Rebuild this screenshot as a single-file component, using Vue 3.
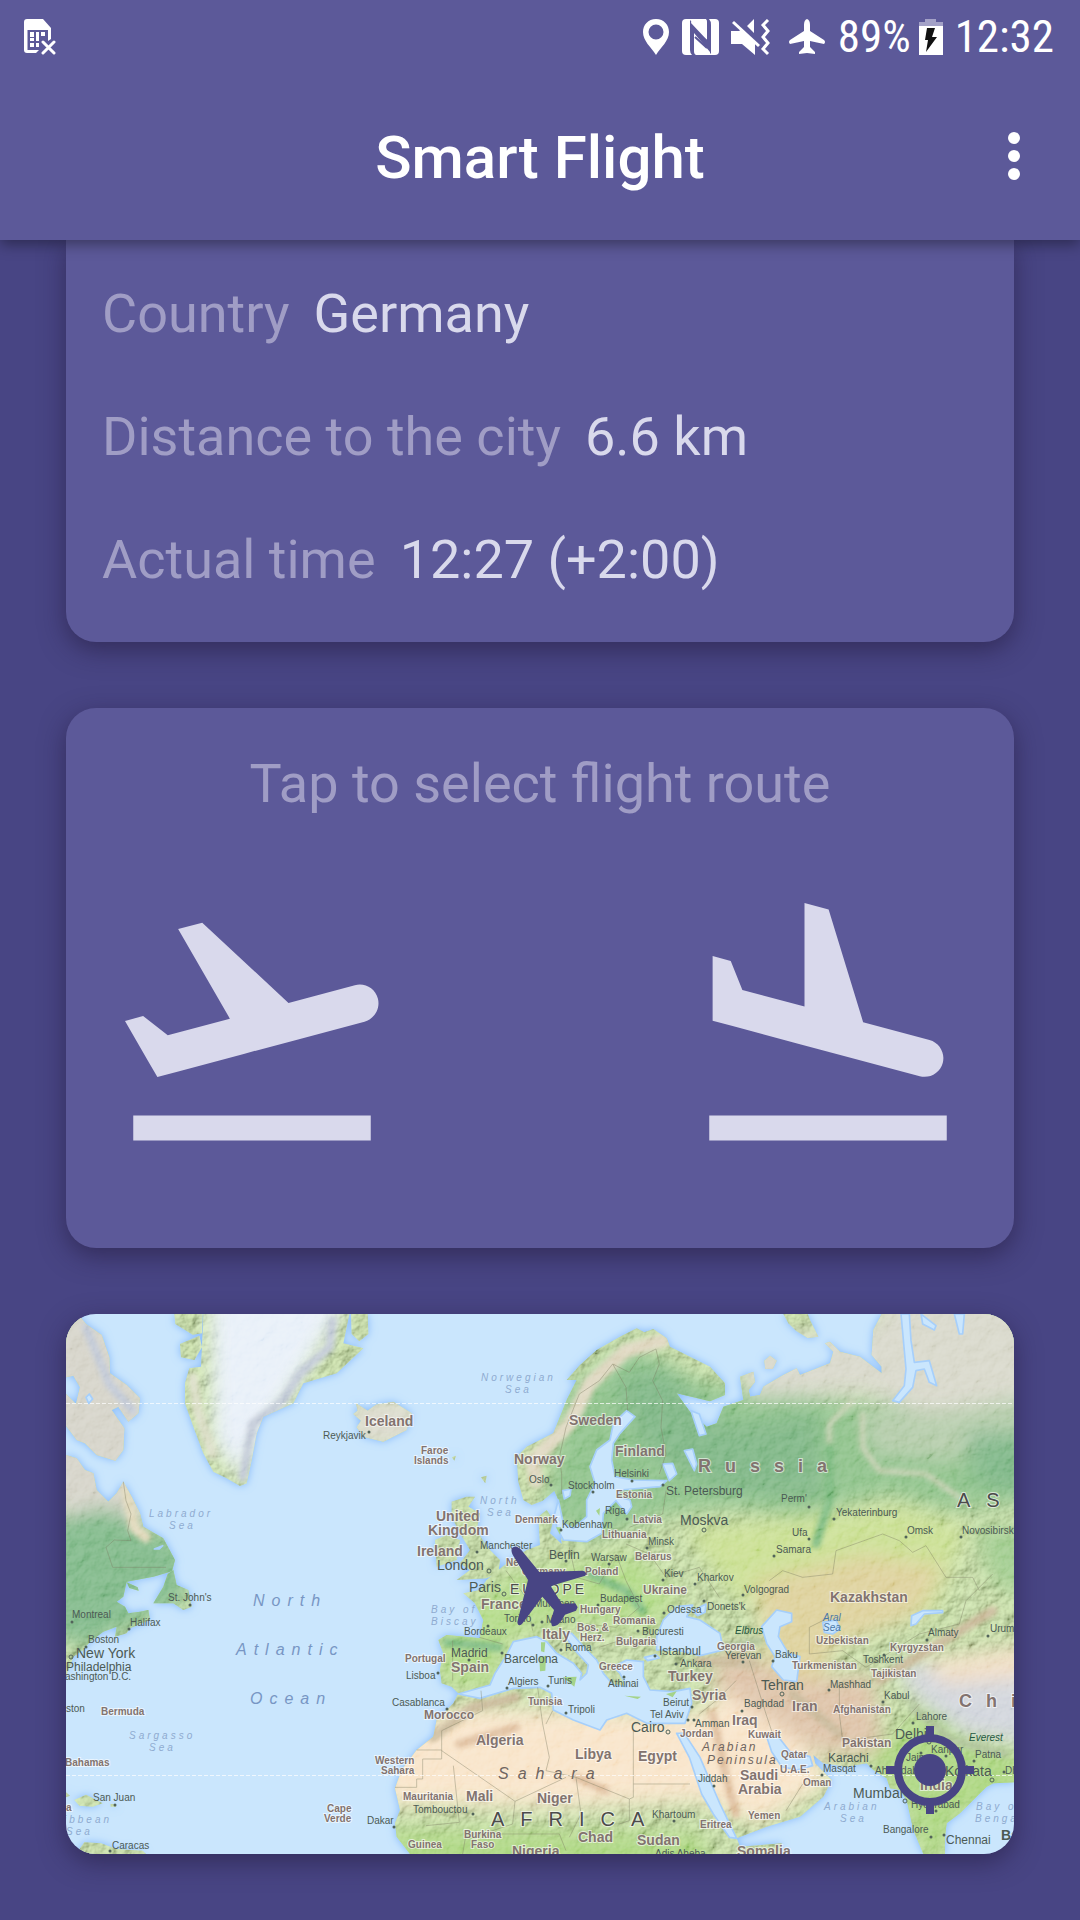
<script setup>
const facts = [
  { label: 'Country', value: 'Germany' },
  { label: 'Distance to the city', value: '6.6 km' },
  { label: 'Actual time', value: '12:27 (+2:00)' }
]

// Map labels grouped by lettering style: [text, x, y]
const labels = {
  city: [
    ['Reykjavik', 257, 125], ['Oslo', 463, 169], ['Helsinki', 548, 163], ['Stockholm', 502, 175],
    ['Riga', 539, 200], ['Kobenhavn', 496, 214], ['Minsk', 582, 231], ['Manchester', 414, 235],
    ['Warsaw', 525, 247], ['Kiev', 598, 263], ['Kharkov', 631, 267], ["Perm'", 715, 188],
    ['Yekaterinburg', 770, 202], ['Ufa', 726, 222], ['Samara', 710, 239], ['Omsk', 841, 220],
    ['Novosibirsk', 896, 220], ["St. John's", 102, 287], ['Montreal', 6, 304], ['Halifax', 64, 312],
    ['Boston', 22, 329], ['ashington D.C.', -1, 366], ['ston', 0, 398], ['San Juan', 27, 487],
    ['Caracas', 46, 535], ['Dakar', 301, 510], ['Munchen', 468, 293], ['Torino', 438, 308],
    ['Milano', 480, 309], ['Budapest', 534, 288], ['Odessa', 601, 299], ['Bucuresti', 576, 321],
    ['Roma', 499, 337], ['Bordeaux', 398, 321], ['Lisboa', 340, 365], ['Algiers', 442, 371],
    ['Tunis', 482, 370], ['Athinai', 542, 373], ['Ankara', 614, 353], ['Casablanca', 326, 392],
    ['Tripoli', 502, 399], ['Beirut', 597, 392], ['Tel Aviv', 584, 404], ['Amman', 629, 413],
    ['Tombouctou', 347, 499], ['Khartoum', 586, 504], ['Adis Abeba', 589, 543], ['Jiddah', 632, 468],
    ['Volgograd', 678, 279], ["Donets'k", 641, 296], ['Yerevan', 659, 345], ['Baku', 709, 344],
    ['Toshkent', 797, 349], ['Almaty', 862, 322], ['Urumqi', 924, 318], ['Mashhad', 764, 374],
    ['Kabul', 818, 385], ['Baghdad', 678, 393], ['Lahore', 850, 406], ['Kanpur', 865, 439],
    ['Patna', 909, 444], ['Jaipur', 840, 447], ['Ahmadabad', 809, 460], ['Dhaka', 939, 460],
    ['Masqat', 757, 458], ['Hyderabad', 845, 494], ['Bangalore', 817, 519]
  ],
  town: [
    ['Berlin', 483, 245], ['St. Petersburg', 600, 181], ['Philadelphia', 0, 357], ['Madrid', 385, 343],
    ['Barcelona', 438, 349], ['Istanbul', 593, 341], ['Karachi', 762, 448], ['Chennai', 880, 530]
  ],
  capital: [
    ['London', 371, 256], ['Moskva', 614, 211], ['New York', 10, 344], ['Paris', 403, 278],
    ['Cairo', 565, 418], ['Tehran', 695, 376], ['Delhi', 829, 425], ['Kolkata', 879, 462],
    ['Mumbai', 787, 484]
  ],
  state: [
    ['Faroe', 355, 140], ['Islands', 348, 150], ['Estonia', 550, 184], ['Latvia', 567, 209],
    ['Denmark', 449, 209], ['Lithuania', 536, 224], ['Belarus', 569, 246], ['Neth.', 440, 252],
    ['Germany', 456, 261], ['Poland', 519, 261], ['Bermuda', 35, 401], ['Bahamas', -1, 452],
    ['a', 0, 497], ['Cape', 261, 498], ['Verde', 258, 508], ['Western', 309, 450], ['Sahara', 315, 460],
    ['Hungary', 514, 299], ['Romania', 547, 310], ['Bulgaria', 550, 331], ['Bos. &', 511, 317],
    ['Herz.', 514, 327], ['Portugal', 339, 348], ['Greece', 533, 356], ['Tunisia', 462, 391],
    ['Jordan', 614, 423], ['Mauritania', 337, 486], ['Burkina', 398, 524], ['Faso', 405, 534],
    ['Guinea', 342, 534], ['Eritrea', 634, 514], ['Uzbekistan', 750, 330], ['Georgia', 651, 336],
    ['Turkmenistan', 726, 355], ['Kyrgyzstan', 824, 337], ['Tajikistan', 805, 363],
    ['Afghanistan', 767, 399], ['Kuwait', 682, 424], ['Qatar', 715, 444], ['U.A.E.', 714, 459],
    ['Oman', 737, 472], ['Yemen', 682, 505]
  ],
  nation: [['Ukraine', 577, 280], ['Morocco', 358, 405], ['Pakistan', 776, 433]],
  country: [
    ['Iceland', 299, 112], ['Sweden', 503, 111], ['Norway', 448, 150], ['Finland', 549, 142],
    ['United', 370, 207], ['Kingdom', 362, 221], ['Ireland', 351, 242], ['France', 415, 295],
    ['Italy', 476, 325], ['Spain', 385, 358], ['Turkey', 602, 367], ['Syria', 626, 386],
    ['Algeria', 410, 431], ['Libya', 509, 445], ['Egypt', 572, 447], ['Mali', 400, 487],
    ['Niger', 471, 489], ['Nigeria', 446, 542], ['Chad', 512, 528], ['Sudan', 571, 531],
    ['Kazakhstan', 764, 288], ['Iran', 726, 397], ['Iraq', 666, 411], ['Saudi', 674, 466],
    ['Arabia', 672, 480], ['India', 854, 476], ['Somalia', 671, 542]
  ],
  giant: [['Russia', 632, 158], ['China', 893, 393]],
  sea: [
    ['Labrador', 83, 203], ['Sea', 103, 215], ['Norwegian', 415, 67], ['Sea', 439, 79],
    ['North', 414, 190], ['Sea', 421, 202], ['Sargasso', 63, 425], ['Sea', 83, 437],
    ['ibbean', -2, 509], ['Sea', 0, 521], ['Bay of', 365, 299], ['Biscay', 365, 311],
    ['Arabian', 758, 496], ['Sea', 774, 508], ['Bay of', 910, 496], ['Bengal', 909, 508]
  ],
  ocean: [['North', 187, 292], ['Atlantic', 170, 341], ['Ocean', 184, 390]],
  lake: [['Aral', 757, 307], ['Sea', 757, 317]],
  peak: [['Elbrus', 669, 320], ['Everest', 903, 427]],
  desert: [['Sahara', 432, 465]],
  region: [['Arabian', 636, 437], ['Peninsula', 641, 450]],
  europe: [['EUROPE', 444, 280]],
  continent: [['ASIA', 891, 193], ['AFRICA', 425, 512]],
  edge: [['Bangkok', 935, 526]]
}

const dots = [
  [303, 118], [485, 171], [527, 178], [566, 167], [597, 171], [561, 205], [495, 216], [581, 234],
  [411, 238], [500, 247], [543, 250], [597, 266], [629, 270], [743, 193], [768, 205], [743, 225],
  [708, 242], [840, 223], [895, 223], [124, 291], [6, 308], [63, 315], [20, 333], [49, 491],
  [44, 537], [328, 513], [422, 312], [467, 311], [476, 308], [532, 291], [598, 299], [572, 317],
  [495, 336], [436, 339], [403, 346], [372, 359], [441, 374], [482, 372], [558, 363], [589, 342],
  [610, 350], [381, 395], [500, 399], [626, 393], [622, 406], [628, 406], [407, 500], [608, 507],
  [677, 281], [638, 287], [677, 348], [707, 347], [818, 341], [861, 326], [922, 322], [763, 376],
  [817, 388], [676, 397], [847, 409], [880, 442], [908, 447], [855, 439], [938, 458], [756, 461],
  [870, 497], [865, 523], [878, 521], [805, 452], [648, 472]
]
const rings = [[423, 257], [638, 216], [5, 343], [438, 280], [602, 418], [716, 380], [863, 428], [926, 466], [839, 487]]
</script>

<template>
  <div class="screen">
    <header class="header">
      <div class="status">
        <svg class="sim" viewBox="0 0 32 36" width="32" height="36" aria-hidden="true">
          <path fill="#fff" d="M3 0H19L27 9V20L24 22V11H3.500V31H15L12 34H3Q0 34 0 31V3Q0 0 3 0Z" />
          <path fill="#fff" d="M6 13h4v5H6zM12 13h3v9h-3zM17 13h4v4h-4zM6 19h4v3H6zM6 24h4v4H6zM12 24h3v4h-3z" />
          <path fill="none" stroke="#fff" stroke-width="3" stroke-linecap="round" d="M19 23 30 34M30 23 19 34" />
        </svg>
        <span class="spring"></span>
        <svg class="pin" viewBox="0 0 26 36" width="26" height="36" aria-hidden="true">
          <path fill="#fff" fill-rule="evenodd" d="M13 0C5 0 0 6 0 13C0 22 8 28 13 36C18 28 26 22 26 13C26 6 21 0 13 0ZM13 5.500A7.500 7.500 0 1 1 13 20.500A7.500 7.500 0 1 1 13 5.500Z" />
        </svg>
        <svg class="nfc" viewBox="0 0 37 36" width="37" height="36" aria-hidden="true">
          <rect width="37" height="36" rx="4" fill="#fff" />
          <path fill="#5c5999" d="M8 1 25 19V4Q25 1 24 0H27Q29 2 29 6V35L12 17V32Q12 35 14 36H10Q8 34 8 31Z" />
          <path fill="#fff" d="M9 4 25 21V4Q25 1 23 0H10ZM12 14 28 33V35H14Q12 34 12 31Z" />
          <path fill="none" stroke="#5c5999" stroke-width="2" d="M13 13 25 22M13 18 25 29" />
        </svg>
        <svg class="mute" viewBox="0 0 39 37" width="39" height="37" aria-hidden="true">
          <path fill="#fff" d="M0 12H8L11 10 24 23V36L11 25H0ZM16 7 23 0V14Z" />
          <path fill="none" stroke="#fff" stroke-width="3" d="M2 3 28 27" />
          <path fill="none" stroke="#fff" stroke-width="3" d="M37 1 32 6 37 12 32 18 37 24 32 30 37 35" />
        </svg>
        <svg class="plane" viewBox="0 0 36 36" width="36" height="36" aria-hidden="true">
          <path fill="#fff" d="M18 0Q21 1 21 6V12L35 21Q37 23 35 25L21 22V28L26 33V35L18 34 10 35V33L15 28V22L1 25Q-1 23 1 21L15 12V6Q15 1 18 0Z" />
        </svg>
        <span class="percent">89%</span>
        <svg class="battery" viewBox="0 0 24 36" width="24" height="36" aria-hidden="true">
          <path fill="#a3a1c7" d="M6 0H17V3H24V7H0V3H6Z" />
          <path fill="#fff" d="M0 7H24V36H0Z" />
          <path fill="#111" d="M8 9H16L13 18H18L7 33 9 21H6Z" />
        </svg>
        <time class="clock">12:32</time>
      </div>
      <div class="toolbar">
        <h1>Smart Flight</h1>
        <button class="more" type="button" aria-label="More options">
          <svg viewBox="0 0 12 48" width="12" height="48" fill="#fff" aria-hidden="true">
            <circle cx="6" cy="6" r="6" /><circle cx="6" cy="24" r="6" /><circle cx="6" cy="42" r="6" />
          </svg>
        </button>
      </div>
    </header>

    <main class="content">
      <dl class="card facts">
        <div v-for="fact in facts" :key="fact.label" class="fact">
          <dt>{{ fact.label }}</dt>
          <dd>{{ fact.value }}</dd>
        </div>
      </dl>

      <section class="card route">
        <h2>Tap to select flight route</h2>
        <div class="route-ends">
          <button type="button" aria-label="Departure">
            <svg viewBox="0 0 24 24" width="300" height="300" aria-hidden="true">
              <path d="M2.500 19h19v2h-19v-2zm19.570-9.360c-.21-.8-1.040-1.280-1.840-1.060L14.920 10l-6.900-6.430-1.930.51 4.140 7.170-4.970 1.330-1.970-1.540-1.450.39 1.820 3.160.77 1.330 1.600-.43 5.310-1.420 4.350-1.160L21 11.490c.81-.23 1.280-1.050 1.070-1.850z" />
            </svg>
          </button>
          <button type="button" aria-label="Arrival">
            <svg viewBox="0 0 24 24" width="300" height="300" aria-hidden="true">
              <path d="M2.500 19h19v2h-19v-2zm7.180-5.730l4.350 1.160 5.310 1.420c.8.21 1.620-.26 1.840-1.060.21-.8-.26-1.620-1.060-1.840l-5.310-1.420-2.760-9.020L10.120 2v8.280L5.150 8.950l-.93-2.320-1.450-.39v5.170l1.600.43 5.310 1.430z" />
            </svg>
          </button>
        </div>
      </section>

      <section class="card map">
        <svg class="world" viewBox="0 0 948 540" role="img" aria-label="World map">
          <defs>
            <g id="land">
              <!-- Greenland, Baffin, Labrador, Newfoundland -->
              <path d="M412 0 410 60 405 158 370 163 357 208 357 268 382 338 412 418 442 473 482 493 522 516 542 508 557 438 572 358 592 308 682 268 712 208 812 178 892 103 832 88 850 0Z" />
              <path d="M325 0 410 0 408 58 380 62 328 30ZM342 90 400 65 408 100 385 138 345 130ZM855 0H905L907 60 880 82 857 60Z" />
              <path d="M0 20 40 5 60 30 107 63 130 130 132 178 182 213 222 253 217 298 187 323 157 278 137 288 175 343 172 408 148 440 92 423 57 388 32 378 0 335V240L30 270 42 220 22 185 0 190Z" />
              <path d="M0 423 32 433 57 468 82 478 92 528 127 563 152 538 172 503 197 548 222 598 232 638 292 673 327 738 318 772 262 788 182 803 172 848 152 863 177 878 187 898 222 893 247 888 252 918 192 943 182 958 147 968 152 938 112 953 72 983 52 1008 22 1028 12 1058 0 1085Z" />
              <path d="M322 768 332 813 367 828 377 878 352 888 322 868 262 868 292 818 305 780Z" />
              <path d="M182 805 215 820 218 830 190 822ZM0 1435 12 1445 0 1450ZM25 1458 60 1442 110 1468 80 1478 40 1475ZM134 1470H150V1478H134ZM30 1620 55 1585 105 1588 150 1605 230 1610 240 1620Z" />
              <!-- Iceland and the British Isles -->
              <path d="M870 268 905 290 930 272 982 263 1037 298 1022 348 952 383 892 368 872 340 885 320 862 300 875 290Z" />
              <path d="M1157 563 1202 548 1227 548 1207 578 1242 598 1232 648 1262 698 1302 738 1297 778 1262 793 1172 798 1212 768 1182 748 1212 708 1182 658 1157 608Z" />
              <path d="M1107 678 1142 663 1182 678 1172 738 1112 758ZM1245 490 1262 485 1258 508ZM1158 430 1170 425 1165 440Z" />
              <!-- Kolguyev, Novaya Zemlya -->
              <path d="M2152 0H2225L2232 18 2257 68 2225 72 2190 50 2167 28Z" />
              <path d="M2095 140 2112 125 2132 140 2120 165 2098 165Z" />
              <!-- Eurasia and Africa -->
              <path d="M1357 503 1352 428 1382 398 1462 358 1482 308 1502 258 1532 198 1502 198 1542 153 1592 108 1662 68 1712 43 1735 55 1762 45 1802 73 1812 98 1872 128 1932 158 1977 208 1977 243 1932 262 1832 238 1870 290 1922 338 1952 328 1972 278 2032 258 2022 188 2062 173 2067 203 2048 228 2052 248 2082 243 2092 218 2152 183 2192 163 2202 183 2292 148 2302 113 2277 88 2292 83 2322 113 2382 128 2447 178 2447 158 2417 123 2422 48 2447 0H2844V1405L2782 1408 2762 1418 2742 1438 2682 1498 2642 1528 2637 1568V1620H2572L2542 1548 2522 1458 2502 1428 2472 1423 2462 1393 2422 1368 2402 1348 2342 1358 2272 1348 2242 1323 2247 1348 2297 1398 2272 1448 2202 1508 2102 1538 2012 1573 2022 1598 2147 1588 2142 1620H1032L992 1568 987 1528 1002 1488 987 1423 1007 1368 1052 1308 1102 1268 1112 1218 1162 1168 1177 1138 1157 1118 1127 1108 1122 1068 1132 1018 1117 978 1142 963 1242 973 1252 918 1227 868 1192 838 1242 828 1262 798 1322 748 1382 708 1422 693 1417 608 1442 588 1462 618 1452 658 1487 690 1477 558 1465 530 1430 560 1397 573 1372 558Z" />
            </g>
            <mask id="land-mask" maskUnits="userSpaceOnUse" x="0" y="0" width="2844" height="1620">
              <use href="#land" fill="#fff" />
            </mask>
            <filter id="coast" x="-5%" y="-5%" width="110%" height="110%">
              <feDropShadow dx="0" dy="0" stdDeviation="12" flood-color="#84b8fb" flood-opacity="1" />
            </filter>
            <filter id="soft" x="-30%" y="-30%" width="160%" height="160%"><feGaussianBlur stdDeviation="28" /></filter>
            <filter id="ridge" x="-30%" y="-30%" width="160%" height="160%"><feGaussianBlur stdDeviation="8" /></filter>
            <filter id="relief" x="0" y="0" width="100%" height="100%">
              <feTurbulence type="fractalNoise" baseFrequency="0.024" numOctaves="5" seed="7" />
              <feColorMatrix type="matrix" values="0 0 0 0 0 0 0 0 0 0 0 0 0 0 0 1 0 0 0 0" />
              <feDiffuseLighting surfaceScale="12" lighting-color="#ffffff" diffuseConstant="1">
                <feDistantLight azimuth="225" elevation="40" />
              </feDiffuseLighting>
            </filter>
          </defs>

          <rect width="948" height="540" fill="#cae6fd" />
          <g transform="scale(.333333)">
            <use href="#land" fill="#bfe08f" filter="url(#coast)" />
            <g mask="url(#land-mask)">
              <g filter="url(#soft)">
                <path fill="#d3d1c6" d="M-60-60H260V620H0L-60 560Z" />
                <path fill="#7cb685" d="M-60 620 120 580 360 690V860L60 1000-60 960Z" />
                <path fill="#e7eff8" d="M430-60H860L700 200 560 420 520 500 440 380Z" />
                <path fill="#d9d8cb" d="M850 250H1060V400H850Z" />
                <path fill="#8abf86" d="M1480 240 1700 90 1900 200 2100 240 2500 270 2900 230V560L2650 590 2460 540 2200 610 2000 580 1800 600 1560 680 1440 600Z" />
                <path fill="#d6d6c8" d="M2000 80 2400 40 2480-60H2900V260L2640 320 2400 240 2050 250Z" />
                <path fill="#b0c9a6" d="M2380 290 2640 290 2900 240V330L2660 440 2420 420Z" />
                <path fill="#73ae7f" d="M1640 200 1790 150 1980 330 2260 290 2280 560 1960 540 1720 400Z" opacity=".7" />
                <path fill="#6eab80" d="M2700 350H2900V560L2720 500Z" opacity=".6" />
                <path fill="#c8de8f" d="M1860 650 2500 580 2700 640 2600 900 2300 960 2000 840Z" />
                <path fill="#dccf98" d="M2060 800 2400 720 2640 760 2560 900 2300 1000 2260 1150 2100 1040 2080 900Z" />
                <path fill="#9cc98a" d="M2720 640H2900V860L2780 800Z" />
                <path fill="#b0d985" d="M1120 960 1330 780 1700 720 1840 840 1760 940 1500 920 1330 970 1280 1130 1120 1110Z" />
                <path fill="#f8e3c7" d="M940 1290 1180 1180 1560 1190 1900 1200 2040 1060 2180 1250 2300 1400 2080 1530 1900 1460 1500 1480 950 1470Z" />
                <path fill="#dcc0a4" d="M1980 990 2200 1100 2420 1080 2450 1320 2260 1320 2080 1200 1930 1110Z" />
                <path fill="#a9d47d" d="M940 1550 1400 1550 1900 1560 1960 1700H900ZM2400 1340 2580 1180 2700 1290 2880 1320V1440L2680 1500 2600 1700 2500 1440Z" />
                <path fill="#cfd3da" d="M2480 1060 2900 990V1290L2700 1260 2560 1160Z" />
                <path fill="#f0dcc2" d="M2560 1040 2900 990V1090L2640 1110Z" />
              </g>
              <g filter="url(#ridge)" fill="none" stroke-linecap="round">
                <path stroke="#ddd5bd" stroke-width="42" d="M1410 500 1400 440 1510 330 1570 210 1680 110 1790 80" />
                <path stroke="#c9cfb2" stroke-width="14" d="M2360 260 2290 330 2290 420M2390 300 2390 400 2440 470 2580 480 2680 550" />
                <path stroke="#78b77b" stroke-width="26" d="M2290 400V560L2250 690M1570 780 1680 830 1730 890M1140 985 1300 1000" />
                <path stroke="#c6b594" stroke-width="28" d="M1100 1270 1220 1180 1350 1150M1900 1040 2060 1050M2180 1140 2320 1260M2440 1100 2600 1000 2780 890" />
                <path stroke="#a9bd93" stroke-width="22" d="M2540 1180 2660 1280 2820 1320M1970 1000 2080 980" />
                <path stroke="#dcb997" stroke-width="24" d="M1180 1290 1350 1240M1530 1390 1620 1430M1940 1200 1980 1390 2010 1500" />
                <path stroke="#bec6d4" stroke-width="26" d="M800 20 790 100 700 180 650 260 560 330 530 490M60 40 130 210 200 290" />
                <path stroke="#d9dcc4" stroke-width="30" d="M380 190 395 290 440 420" />
                <path stroke="#dfd7b8" stroke-width="32" d="M180 530 205 640 240 670" />
              </g>
              <rect class="relief" width="2844" height="1620" filter="url(#relief)" />
            </g>

            <!-- Inland seas, gulfs and lakes -->
            <g class="inland">
              <path d="M1492 678 1562 683 1607 658 1612 598 1650 560 1682 600 1697 578 1692 558 1652 548 1662 528 1782 518 1802 500 1702 498 1647 488 1637 438 1642 388 1662 358 1707 308 1682 290 1642 328 1632 378 1592 408 1572 458 1587 508 1562 558 1562 608 1522 643 1492 628 1477 558 1466 600 1472 640Z" />
              <path d="M1177 1140 1272 1113 1287 1078 1322 1023 1342 983 1412 968 1442 983 1472 1018 1522 1048 1547 1078 1542 1098 1562 1078 1567 1053 1522 1003 1492 958 1517 958 1562 1008 1592 1038 1612 1078 1642 1113 1682 1118 1662 1078 1642 1058 1682 1038 1732 1043 1732 1088 1752 1128 1822 1133 1872 1123 1877 1168 1857 1228 1802 1228 1742 1228 1682 1198 1622 1218 1602 1248 1522 1218 1462 1188 1457 1138 1422 1120 1342 1123 1242 1153Z" />
              <path d="M1772 1008 1772 968 1792 918 1832 878 1880 873 1862 908 1902 918 1962 958 1972 1008 1902 1025 1832 1008ZM1880 890 1920 870 1917 895 1895 905ZM1735 1030 1770 1022 1780 1032 1745 1040Z" />
              <path d="M2087 938 2132 888 2177 898 2177 923 2142 938 2137 968 2167 1018 2202 1028 2192 1103 2152 1098 2117 1058 2127 1028 2102 988Z" />
              <path d="M2270 925 2310 918 2322 945 2300 960 2275 955ZM2535 935 2537 905 2570 890 2630 890 2630 896 2575 900 2550 930Z" />
              <path d="M1832 1258 1855 1258 1902 1330 1962 1470 2012 1573 1990 1570 1942 1500 1907 1440 1870 1330Z" />
              <path d="M2102 1268 2137 1268 2172 1313 2232 1328 2240 1355 2192 1368 2147 1358 2117 1313Z" />
              <path d="M1790 450 1820 448 1832 480 1810 500ZM1855 410 1880 405 1892 450 1885 470ZM1875 290 1900 300 1920 360 1900 365ZM1490 530 1515 525 1512 545 1495 555Z" />
              <path d="M2505 0H2530L2535 80 2545 145 2590 140 2612 215 2590 205 2575 165 2550 170 2540 220 2500 265 2480 260 2515 215 2520 165ZM2565 0 2610 35 2605 48 2570 30ZM2665 0H2695L2690 60 2680 60Z" />
              <path d="M265 705 290 695 280 705ZM60 250 70 240 80 255 68 268Z" />
            </g>
            <g fill="#a5d38a">
              <path d="M1425 985 1438 985 1435 1015 1425 1012ZM1420 1030 1440 1025 1438 1070 1422 1072ZM1490 1090 1532 1088 1525 1118ZM1675 1145 1725 1148 1715 1155ZM1800 1140 1832 1132 1820 1150ZM1590 590 1602 582 1600 605ZM1470 640 1485 640 1482 662Z" />
            </g>

            <!-- Borders -->
            <g class="border">
              <path d="M172 503 180 560 195 600 185 650 195 680 145 678 120 700 140 760 300 760M1487 540V480L1480 430 1500 340 1540 240 1600 200 1640 150 1690 175 1720 130 1770 105 1780 150 1760 200 1790 260 1785 340 1800 420 1780 480M1640 150 1680 220 1685 290" />
              <path d="M2110 800 2150 770 2210 790 2300 780 2310 710 2450 660 2500 680 2540 715 2580 695 2640 790 2720 790 2740 830M2230 1020V940L2290 910M2230 1020 2330 1010 2400 1060 2480 1010 2560 960 2680 930 2700 860 2780 780" />
              <path d="M1052 1308H1127V1335H1070V1395H1052V1420H987M1127 1250V1310L1330 1450 1347 1462 1500 1390M1162 1355 1180 1525 1080 1535M1127 1250 1250 1190 1245 1130M1415 1120 1430 1230 1450 1330 1440 1370 1530 1390 1690 1455V1520L1660 1530M1702 1250V1450L1690 1455M1702 1410H1872M1530 1390 1545 1500 1510 1570M1347 1462 1340 1530 1250 1560M1460 1190 1440 1230M1190 1620 1200 1560 1340 1560 1480 1560 1500 1610" />
              <path d="M1310 990 1240 970M1160 980V1100M1320 770 1380 850 1400 950M1510 700 1530 790 1600 810 1650 720 1680 800 1720 880 1650 940 1560 930M1680 690 1750 720 1800 790 1900 760 1960 850M1690 640 1740 620 1790 600 1800 530M1600 1000 1660 980 1740 990M2010 1100 1950 1160 1900 1200M2050 1040 2100 1200 2120 1260M2320 1110V1200L2330 1280 2480 1260 2560 1170M2160 1490 2210 1410" />
            </g>
          </g>

          <path class="parallel" d="M0 89.500H948M0 461.500H948" />

          <g fill="#52645a"><circle v-for="(d, i) in dots" :key="i" :cx="d[0]" :cy="d[1]" r="1.500" /></g>
          <g class="rings"><circle v-for="(d, i) in rings" :key="i" :cx="d[0]" :cy="d[1]" r="2" /></g>
          <g v-for="(items, kind) in labels" :key="kind" :class="['label', kind]">
            <text v-for="(l, i) in items" :key="i" :x="l[1]" :y="l[2]">{{ l[0] }}</text>
          </g>

          <path transform="scale(.333333)" fill="#484584" d="M1338 702Q1350 690 1366 708L1420 774 1550 770Q1565 774 1558 785L1454 816 1488 870 1528 868 1535 880 1530 890 1497 902 1485 922Q1472 940 1458 936L1454 922 1464 888 1429 848 1368 930Q1356 940 1354 924L1386 798 1340 722Q1334 710 1338 702Z" />
        </svg>
        <button class="locate" type="button" aria-label="My location">
          <svg viewBox="0 0 24 24" width="96" height="96" aria-hidden="true">
            <circle cx="12" cy="12" r="4" fill="#484584" />
            <circle cx="12" cy="12" r="8" fill="none" stroke="#484584" stroke-width="2" />
            <path stroke="#484584" stroke-width="2" d="M12 1V4M12 20V23M1 12H4M20 12H23" />
          </svg>
        </button>
      </section>
    </main>
  </div>
</template>

<style>
body {
  margin: 0;
  background: #484584;
}
</style>

<style scoped>
.screen {
  min-height: 100vh;
  background: #484584;
  color: #fff;
  font-family: Roboto, "Noto Sans", sans-serif;
}
button {
  padding: 0;
  border: 0;
  background: none;
  cursor: pointer;
}
svg {
  display: block;
}
.header {
  position: relative;
  z-index: 1;
  background: #5c5999;
  box-shadow: 0 4px 14px rgba(0, 0, 0, 0.4);
}
.status {
  display: flex;
  align-items: center;
  height: 74px;
  padding: 0 26px 0 24px;
  font-family: "Roboto Condensed", "Liberation Sans Narrow", Roboto, sans-serif;
  font-size: 45px;
  line-height: 76px;
}
.status svg {
  flex: none;
}
.spring {
  flex: 1;
}
.nfc {
  margin-left: 13px;
}
.mute {
  margin-left: 12px;
}
.plane {
  margin-left: 19px;
}
.percent {
  margin-left: 13px;
}
.battery {
  margin-left: 8px;
}
.clock {
  margin-left: 12px;
}
.toolbar {
  display: grid;
  grid-template-columns: 1fr auto 1fr;
  align-items: center;
  height: 166px;
}
h1 {
  grid-column: 2;
  margin: 0;
  padding-top: 2px;
  font-size: 60px;
  font-weight: 500;
  line-height: 70px;
}
.more {
  justify-self: end;
  margin-right: 30px;
  padding: 16px 30px 18px;
}
.content {
  display: flex;
  flex-direction: column;
  gap: 66px;
  padding: 0 66px 66px;
}
.card {
  border-radius: 30px;
  background: #5c5999;
  box-shadow: 0 8px 26px rgba(30, 20, 50, 0.5);
}
.facts {
  margin: 0;
  padding: 12px 36px 21px;
  border-radius: 0 0 30px 30px;
}
.fact {
  display: flex;
  gap: 24px;
  font-size: 54px;
  line-height: 123px;
}
dt,
h2 {
  color: #a09dc5;
}
dd {
  margin: 0;
  color: #d9d9ec;
}
.route {
  padding: 36px 36px 70px;
}
h2 {
  margin: 0;
  font-size: 54px;
  font-weight: 400;
  line-height: 80px;
  text-align: center;
}
.route-ends {
  display: flex;
  justify-content: space-between;
  margin-top: 54px;
  fill: #d9d9ec;
}
.map {
  position: relative;
  overflow: hidden;
}
.world {
  width: 100%;
  height: auto;
}
.locate {
  position: absolute;
  right: 36px;
  bottom: 36px;
}
.relief {
  mix-blend-mode: soft-light;
  opacity: 0.4;
}
.inland {
  fill: #cae6fd;
  stroke: #a6cffb;
  stroke-width: 5;
  stroke-linejoin: round;
}
.border {
  fill: none;
  stroke: #7b7b62;
  stroke-width: 2;
  opacity: 0.6;
}
.parallel {
  stroke: #fff;
  stroke-dasharray: 4 2;
  opacity: 0.7;
}
.rings {
  fill: none;
  stroke: #52645a;
}
.label {
  font-family: "Liberation Sans", Arial, sans-serif;
  font-size: 10px;
  fill: #4c5a54;
}
.town {
  font-size: 12px;
}
.capital {
  font-size: 14px;
}
.state,
.nation,
.country,
.giant {
  font-weight: 700;
  fill: #82736f;
  stroke: rgba(255, 255, 255, 0.6);
  stroke-width: 2px;
  paint-order: stroke;
}
.nation {
  font-size: 12px;
}
.country {
  font-size: 14px;
}
.giant {
  font-size: 18px;
  letter-spacing: 14px;
}
.sea,
.ocean {
  font-size: 10px;
  font-style: italic;
  letter-spacing: 3px;
  fill: #8fabd0;
}
.ocean {
  font-size: 16px;
  letter-spacing: 7px;
  fill: #7896c4;
}
.lake,
.peak {
  font-style: italic;
  fill: #4b78a8;
}
.peak {
  fill: #24583f;
}
.desert,
.region {
  font-size: 16px;
  font-style: italic;
  letter-spacing: 9px;
  fill: #6f6560;
}
.region {
  font-size: 12px;
  letter-spacing: 2px;
}
.europe,
.continent {
  font-size: 14px;
  letter-spacing: 3px;
  fill: #4b4b4b;
  stroke: rgba(255, 255, 255, 0.6);
  stroke-width: 2px;
  paint-order: stroke;
}
.continent {
  font-size: 20px;
  letter-spacing: 16px;
}
.edge {
  font-size: 14px;
  font-weight: 700;
}
</style>
